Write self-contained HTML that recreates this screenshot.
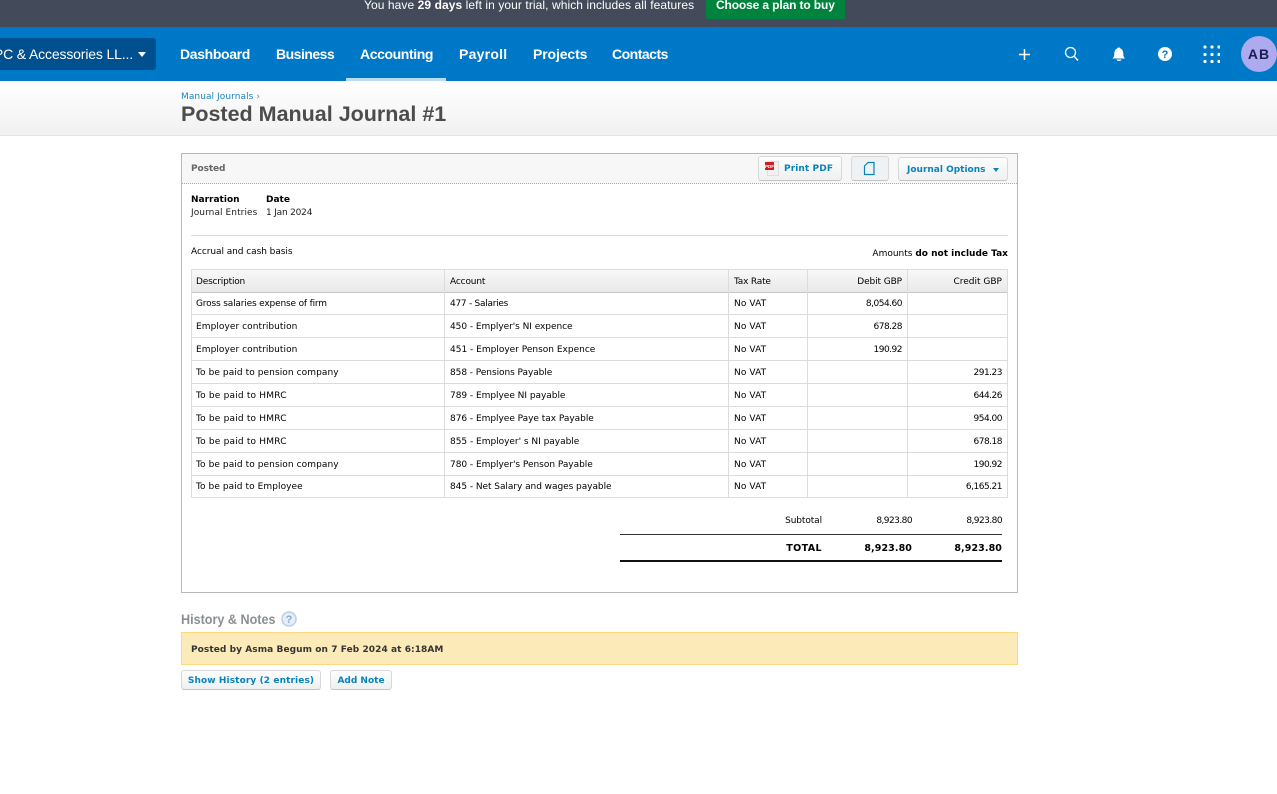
<!DOCTYPE html>
<html><head><meta charset="utf-8"><title>Posted Manual Journal #1</title>
<style>
html,body{margin:0;padding:0;background:#fff;width:1277px;height:794px;overflow:hidden}
body{position:relative;font-family:"DejaVu Sans",sans-serif;font-size:9px;color:#000}
.a{position:absolute;white-space:nowrap}
.l{font-family:"Liberation Sans",sans-serif}
.n{font-family:"Liberation Sans",sans-serif;font-weight:700;font-size:14px;color:#fff;top:46px;line-height:16px}
.h{position:absolute;background:#dcdcdc}
.t{position:absolute;white-space:nowrap;line-height:12px}
.r{text-align:right}
.v{left:734px;letter-spacing:.1px}
.m{letter-spacing:-.5px}
.btn{position:absolute;box-sizing:border-box;border:1px solid #d8d8d8;border-bottom-color:#c4c4c4;border-radius:3px;background:linear-gradient(#fdfdfd,#eef0f1);color:#0a83b8;font-weight:700;font-size:9px;white-space:nowrap}
</style></head><body>
<div class="a" style="left:0;top:0;width:1277px;height:27px;background:#434a5a"></div>
<div class="a l" style="left:364px;top:-3px;font-size:12px;line-height:16px;color:#fff;letter-spacing:.08px">You have <b>29 days</b> left in your trial, which includes all features</div>
<div class="a" style="left:706px;top:-4px;width:139px;height:23px;background:#00843d;border-radius:2px"></div>
<div class="a l" style="left:716px;top:-3px;color:#fff;font-size:12px;font-weight:700;line-height:17px;letter-spacing:-.13px">Choose a plan to buy</div>
<div class="a" style="left:0;top:27px;width:1277px;height:54px;background:#0078c8"></div>
<div class="a" style="left:0;top:38px;width:156px;height:32px;background:#00508f;border-radius:0 3px 3px 0"></div>
<div class="a l" style="left:-8px;top:46px;width:141px;font-size:14px;line-height:16px;color:#fff;overflow:hidden;text-align:right;letter-spacing:-.15px">PC &amp; Accessories LL...</div>
<div class="a" style="left:138px;top:52px;width:0;height:0;border-left:4.5px solid transparent;border-right:4.5px solid transparent;border-top:5px solid #fff"></div>
<div class="a n" style="left:180px;letter-spacing:-.35px">Dashboard</div>
<div class="a n" style="left:276px;letter-spacing:-.5px">Business</div>
<div class="a n" style="left:360px;letter-spacing:-.4px">Accounting</div>
<div class="a n" style="left:459px;letter-spacing:.25px">Payroll</div>
<div class="a n" style="left:533px;letter-spacing:-.12px">Projects</div>
<div class="a n" style="left:612px;letter-spacing:-.5px">Contacts</div>
<div class="a" style="left:346px;top:78px;width:100px;height:3px;background:#b9dcf0"></div>
<svg class="a" style="left:1010px;top:36px" width="210" height="36" viewBox="0 0 210 36" fill="none">
<path d="M14.5 13v11M9 18.500h11" stroke="#fff" stroke-width="1.500"/>
<circle cx="60.500" cy="16.500" r="5" stroke="#fff" stroke-width="1.300"/><path d="M64 20l4 4.500" stroke="#fff" stroke-width="1.500"/>
<path d="M102.500 22.500c1.300-1.200 1.800-2.500 1.800-5 0-2.500 1.200-4.500 3-5 .2-1.300 2.800-1.300 3 0 1.800.5 3 2.500 3 5 0 2.500.5 3.800 1.800 5zM106.500 23.500h5c0 2-5 2-5 0z" fill="#fff"/>
<circle cx="155" cy="18" r="7" fill="#fff"/><text x="155" y="22" font-family="Liberation Sans" font-size="11" font-weight="700" fill="#0078c8" text-anchor="middle">?</text>
<g fill="#fff"><circle cx="195" cy="11" r="1.600"/><circle cx="202" cy="11" r="1.600"/><circle cx="209" cy="11" r="1.600"/><circle cx="195" cy="18.500" r="1.600"/><circle cx="202" cy="18.500" r="1.600"/><circle cx="209" cy="18.500" r="1.600"/><circle cx="195" cy="25.500" r="1.600"/><circle cx="202" cy="25.500" r="1.600"/><circle cx="209" cy="25.500" r="1.600"/></g>
</svg>
<div class="a l" style="left:1241px;top:36px;width:36px;height:36px;border-radius:50%;background:#aeaaf0;color:#1d1d4e;font-weight:700;font-size:14px;letter-spacing:1px;line-height:36px;text-align:center">AB</div>

<div class="a" style="left:0;top:81px;width:1277px;height:54px;background:linear-gradient(#fff,#f1f1f1);border-bottom:1px solid #e4e4e4"></div>
<div class="a" style="left:181px;top:91px;font-size:9px;line-height:12px;color:#1b87bd;letter-spacing:.07px">Manual Journals <span style="color:#777">›</span></div>
<div class="a l" style="left:181px;top:101px;font-size:21.500px;font-weight:700;line-height:27px;color:#4c4c4c">Posted Manual Journal #1</div>

<div class="a" style="left:181px;top:153px;width:835px;height:438px;border:1px solid #b8b8b8"></div>
<div class="a" style="left:182px;top:154px;width:835px;height:29px;background:#f7f7f7;border-bottom:1px dotted #aaa"></div>
<div class="t" style="left:191px;top:163px;font-weight:700;color:#666;letter-spacing:-.1px">Posted</div>

<div class="btn" style="left:758px;top:156px;width:84px;height:25px"></div>
<svg class="a" style="left:764px;top:160px" width="16" height="17"><rect x="3.500" y="1.500" width="11" height="14" fill="#f2f2f2" stroke="#ddd"/><rect x="1" y="2" width="9" height="8" fill="#d11f1f"/><text x="5.500" y="8" font-family="Liberation Sans" font-size="4.500" font-weight="700" fill="#fff" text-anchor="middle">PDF</text></svg>
<div class="t" style="left:784px;top:163px;color:#0a83b8;font-weight:700;letter-spacing:.1px">Print PDF</div>
<div class="btn" style="left:851px;top:156px;width:38px;height:25px;background:#eef2f4"></div>
<svg class="a" style="left:862px;top:161px" width="14" height="15" fill="none"><path d="M2.500 5l3.500-3.500h6v12h-9.500z" stroke="#0a83b8" stroke-width="1.200"/></svg>
<div class="btn" style="left:898px;top:157px;width:110px;height:24px"></div>
<div class="t" style="left:907px;top:164px;color:#0a83b8;font-weight:700">Journal Options</div>
<div class="a" style="left:993px;top:168px;width:0;height:0;border-left:3.500px solid transparent;border-right:3.500px solid transparent;border-top:4px solid #0a83b8"></div>

<div class="t" style="left:191px;top:194px;font-weight:700">Narration</div>
<div class="t" style="left:266px;top:194px;font-weight:700">Date</div>
<div class="t" style="left:191px;top:207px;color:#222;letter-spacing:.07px">Journal Entries</div>
<div class="t" style="left:266px;top:207px;color:#222;letter-spacing:-.2px">1 Jan 2024</div>
<div class="h" style="left:191px;top:235px;width:817px;height:1px"></div>
<div class="t" style="left:191px;top:246px;letter-spacing:-.06px">Accrual and cash basis</div>
<div class="t r" style="right:269px;top:248px">Amounts <b>do not include Tax</b></div>

<div class="a" style="left:192px;top:270px;width:815px;height:22px;background:linear-gradient(#f8f8f8,#e9e9e9)"></div>
<div class="h" style="left:191px;top:269px;width:817px;height:1px"></div>
<div class="h" style="left:191px;top:292px;width:817px;height:1px;background:#c4c8cc"></div>
<div class="h" style="left:191px;top:314px;width:817px;height:1px"></div>
<div class="h" style="left:191px;top:337px;width:817px;height:1px"></div>
<div class="h" style="left:191px;top:360px;width:817px;height:1px"></div>
<div class="h" style="left:191px;top:383px;width:817px;height:1px"></div>
<div class="h" style="left:191px;top:406px;width:817px;height:1px"></div>
<div class="h" style="left:191px;top:429px;width:817px;height:1px"></div>
<div class="h" style="left:191px;top:452px;width:817px;height:1px"></div>
<div class="h" style="left:191px;top:475px;width:817px;height:1px"></div>
<div class="h" style="left:191px;top:497px;width:817px;height:1px"></div>
<div class="h" style="left:191px;top:269px;width:1px;height:229px"></div>
<div class="h" style="left:444px;top:269px;width:1px;height:229px"></div>
<div class="h" style="left:728px;top:269px;width:1px;height:229px"></div>
<div class="h" style="left:807px;top:269px;width:1px;height:229px"></div>
<div class="h" style="left:907px;top:269px;width:1px;height:229px"></div>
<div class="h" style="left:1007px;top:269px;width:1px;height:229px"></div>

<div class="t" style="left:196px;top:276px;letter-spacing:-.2px">Description</div><div class="t" style="left:450px;top:276px;letter-spacing:-.15px">Account</div><div class="t" style="left:734px;top:276px;letter-spacing:-.2px">Tax Rate</div><div class="t r" style="right:375px;top:276px;letter-spacing:-.1px">Debit GBP</div><div class="t r" style="right:275px;top:276px;letter-spacing:0">Credit GBP</div>

<div class="t" style="left:196px;top:298px;letter-spacing:-.17px">Gross salaries expense of firm</div><div class="t" style="left:450px;top:298px;letter-spacing:-.27px">477 - Salaries</div><div class="t v" style="top:298px">No VAT</div><div class="t r m" style="right:375px;top:298px">8,054.60</div>
<div class="t" style="left:196px;top:321px;letter-spacing:.06px">Employer contribution</div><div class="t" style="left:450px;top:321px;letter-spacing:-.05px">450 - Emplyer's NI expence</div><div class="t v" style="top:321px">No VAT</div><div class="t r m" style="right:375px;top:321px">678.28</div>
<div class="t" style="left:196px;top:344px;letter-spacing:.06px">Employer contribution</div><div class="t" style="left:450px;top:344px;letter-spacing:0">451 - Employer Penson Expence</div><div class="t v" style="top:344px">No VAT</div><div class="t r m" style="right:375px;top:344px">190.92</div>
<div class="t" style="left:196px;top:367px;letter-spacing:.08px">To be paid to pension company</div><div class="t" style="left:450px;top:367px;letter-spacing:-.06px">858 - Pensions Payable</div><div class="t v" style="top:367px">No VAT</div><div class="t r m" style="right:275px;top:367px">291.23</div>
<div class="t" style="left:196px;top:390px;letter-spacing:.19px">To be paid to HMRC</div><div class="t" style="left:450px;top:390px;letter-spacing:-.03px">789 - Emplyee NI payable</div><div class="t v" style="top:390px">No VAT</div><div class="t r m" style="right:275px;top:390px">644.26</div>
<div class="t" style="left:196px;top:413px;letter-spacing:.19px">To be paid to HMRC</div><div class="t" style="left:450px;top:413px;letter-spacing:-.03px">876 - Emplyee Paye tax Payable</div><div class="t v" style="top:413px">No VAT</div><div class="t r m" style="right:275px;top:413px">954.00</div>
<div class="t" style="left:196px;top:436px;letter-spacing:.19px">To be paid to HMRC</div><div class="t" style="left:450px;top:436px;letter-spacing:-.02px">855 - Employer' s NI payable</div><div class="t v" style="top:436px">No VAT</div><div class="t r m" style="right:275px;top:436px">678.18</div>
<div class="t" style="left:196px;top:459px;letter-spacing:.08px">To be paid to pension company</div><div class="t" style="left:450px;top:459px;letter-spacing:-.03px">780 - Emplyer's Penson Payable</div><div class="t v" style="top:459px">No VAT</div><div class="t r m" style="right:275px;top:459px">190.92</div>
<div class="t" style="left:196px;top:481px;letter-spacing:.07px">To be paid to Employee</div><div class="t" style="left:450px;top:481px;letter-spacing:-.05px">845 - Net Salary and wages payable</div><div class="t v" style="top:481px">No VAT</div><div class="t r m" style="right:275px;top:481px">6,165.21</div>

<div class="t r" style="right:455px;top:515px;letter-spacing:-.1px">Subtotal</div><div class="t r" style="right:365px;top:515px;letter-spacing:-.55px">8,923.80</div><div class="t r" style="right:275px;top:515px;letter-spacing:-.55px">8,923.80</div>
<div class="a" style="left:620px;top:534px;width:382px;height:1px;background:#333"></div>
<div class="t r" style="right:455px;top:543px;font-weight:700;font-size:9.500px;letter-spacing:.4px">TOTAL</div><div class="t r" style="right:365px;top:543px;font-weight:700;font-size:9.500px;letter-spacing:.1px">8,923.80</div><div class="t r" style="right:275px;top:543px;font-weight:700;font-size:9.500px;letter-spacing:.1px">8,923.80</div>
<div class="a" style="left:620px;top:560px;width:382px;height:2px;background:#111"></div>

<div class="a l" style="left:181px;top:611px;font-size:14px;font-weight:700;line-height:17px;color:#8b8f94;transform-origin:0 0;transform:scaleX(.9)">History &amp; Notes</div>
<svg class="a" style="left:281px;top:611px" width="16" height="16"><circle cx="8" cy="8" r="7" fill="#e6eef8" stroke="#b9cfe8" stroke-width="1.500"/><text x="8" y="12" font-family="Liberation Sans" font-size="11" font-weight="700" fill="#8aa8d0" text-anchor="middle">?</text></svg>
<div class="a" style="left:181px;top:632px;width:835px;height:31px;background:#fcebb9;border:1px solid #fbd97f"></div>
<div class="t" style="left:191px;top:644px;font-weight:700;color:#333;letter-spacing:.07px">Posted by Asma Begum on 7 Feb 2024 at 6:18AM</div>
<div class="btn" style="left:181px;top:670px;width:140px;height:20px;line-height:21px;text-align:center;letter-spacing:.1px">Show History (2 entries)</div>
<div class="btn" style="left:330px;top:670px;width:62px;height:20px;line-height:21px;text-align:center">Add Note</div>
</body></html>
